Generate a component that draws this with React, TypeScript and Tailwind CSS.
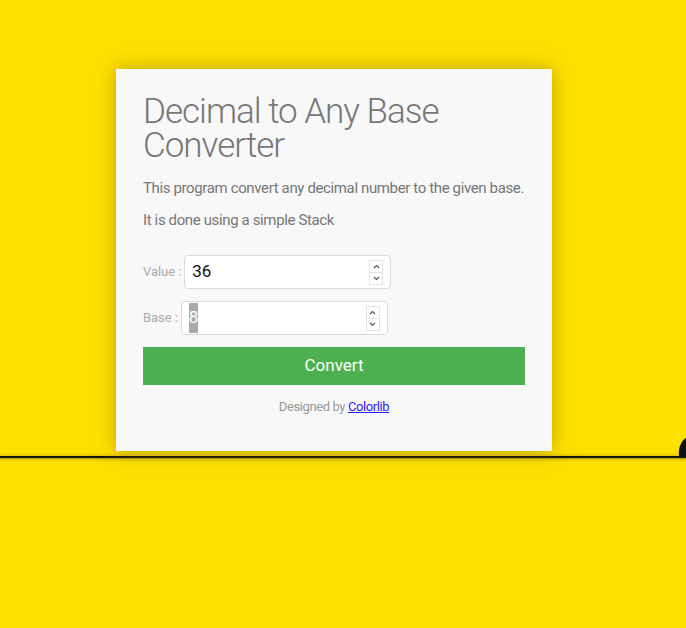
import React from "react";

function Spinner() {
  return (
    <div className="flex flex-col border border-[#e3e3e3] w-[14px] h-[25px] bg-white">
      <div className="flex-1 flex items-center justify-center border-b border-[#e3e3e3]">
        <svg width="7" height="5" viewBox="0 0 7 5"><path d="M1 4 L3.5 1.5 L6 4" fill="none" stroke="#555" strokeWidth="1.2" /></svg>
      </div>
      <div className="flex-1 flex items-center justify-center">
        <svg width="7" height="5" viewBox="0 0 7 5"><path d="M1 1 L3.5 3.5 L6 1" fill="none" stroke="#555" strokeWidth="1.2" /></svg>
      </div>
    </div>
  );
}

export default function App() {
  return (
    <div className="relative w-full h-[628px] overflow-hidden bg-[#ffe100]" style={{ fontFamily: "Roboto, 'Liberation Sans', sans-serif" }}>
      <svg className="absolute left-0 top-0" width="686" height="628" viewBox="0 0 686 628">
        <defs>
          <filter id="blur"><feGaussianBlur stdDeviation="1.2" /></filter>
        </defs>
        <rect x="0" y="454" width="686" height="7" fill="#b89a00" opacity="0.35" filter="url(#blur)" />
        <rect x="0" y="456" width="686" height="2.2" fill="#1a1400" />
        <path d="M679 456 C678 448 681 441 686 438 L686 456 Z" fill="#111" />
      </svg>
      <div className="relative ml-[116px] pt-[69px]">
        <div className="w-[436px] h-[382px] bg-[#f8f8f8] px-[27px] pt-[26px] shadow-[0_0_18px_rgba(120,95,0,0.5)]">
          <h1 className="text-[35px] leading-[34px] font-light text-[#777] tracking-[-1px]">Decimal to Any Base Converter</h1>
          <p className="mt-[15px] text-[15px] leading-[20px] text-[#777] tracking-[-0.37px] whitespace-nowrap">This program convert any decimal number to the given base.</p>
          <p className="mt-[12px] text-[15px] leading-[20px] text-[#777] tracking-[-0.37px]">It is done using a simple Stack</p>
          <div className="mt-[25px] flex items-center">
            <span className="text-[13px] text-[#aaa] mr-[3px] tracking-[-0.05px]">Value :</span>
            <div className="w-[207px] h-[34px] bg-white border border-[#d9d9d9] rounded-[4px] flex items-center pl-[7px] pr-[7px]">
              <span className="flex-1 text-[17px] text-[#111]">36</span>
              <Spinner />
            </div>
          </div>
          <div className="mt-[12px] flex items-center">
            <span className="text-[13px] text-[#aaa] mr-[3px] tracking-[-0.05px]">Base :</span>
            <div className="w-[207px] h-[34px] bg-white border border-[#d9d9d9] rounded-[4px] flex items-center pl-[7px] pr-[7px]">
              <div className="flex-1 flex items-center h-full py-[1px]">
                <span className="h-full flex items-center bg-[#aaaaaa] text-white text-[17px] w-[9px]">8</span>
              </div>
              <Spinner />
            </div>
          </div>
          <button className="mt-[12px] w-full h-[38px] bg-[#4caf50] text-white text-[17px] flex items-center justify-center">Convert</button>
          <p className="mt-[12px] text-center text-[13px] text-[#999] tracking-[-0.4px]">
            Designed by <a href="#" className="text-[#2a1fff] underline">Colorlib</a>
          </p>
        </div>
      </div>
    </div>
  );
}
